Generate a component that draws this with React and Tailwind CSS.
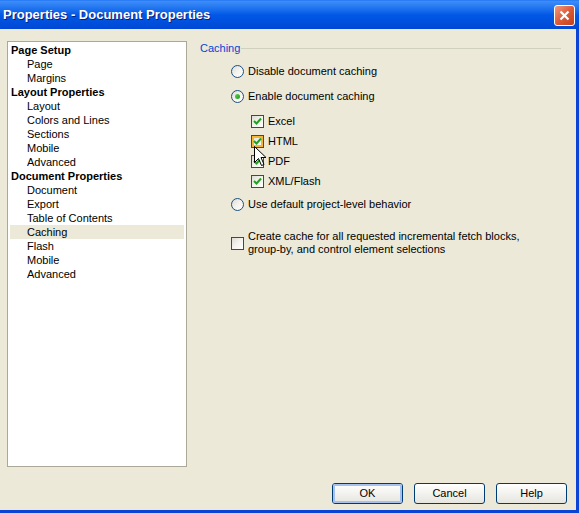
import React from "react";

const font = { fontFamily: '"Liberation Sans", Arial, sans-serif' };

const tree = [
  { label: "Page Setup", head: true },
  { label: "Page" },
  { label: "Margins" },
  { label: "Layout Properties", head: true },
  { label: "Layout" },
  { label: "Colors and Lines" },
  { label: "Sections" },
  { label: "Mobile" },
  { label: "Advanced" },
  { label: "Document Properties", head: true },
  { label: "Document" },
  { label: "Export" },
  { label: "Table of Contents" },
  { label: "Caching", active: true },
  { label: "Flash" },
  { label: "Mobile" },
  { label: "Advanced" },
];

function Radio({ checked }) {
  return (
    <div className="w-[13px] h-[13px] rounded-full border border-[#1C5180] bg-gradient-to-br from-[#DCDBD5] via-[#F4F3EE] to-white flex items-center justify-center shrink-0">
      {checked ? (
        <div className="w-[5px] h-[5px] rounded-full bg-gradient-to-br from-[#55D551] to-[#1F9A1C]" />
      ) : null}
    </div>
  );
}

function Check({ checked, hover }) {
  return (
    <div className="w-[13px] h-[13px] border border-[#1C5180] bg-gradient-to-br from-[#DCDBD5] via-[#F4F3EE] to-white flex items-center justify-center shrink-0">
      <div className={`w-[11px] h-[11px] flex items-center justify-center ${hover ? "border-2 border-[#F8B636]" : ""}`}>
        {checked ? (
          <svg width="9" height="9" viewBox="0 0 9 9" className={hover ? "-m-[2px]" : ""}>
            <path d="M1 4 L3.5 6.5 L8 1.5" fill="none" stroke="#21A121" strokeWidth="2" />
          </svg>
        ) : null}
      </div>
    </div>
  );
}

function Button({ label, def }) {
  return (
    <div className="w-[71px] h-[21px] rounded-[3px] border border-[#003C74] bg-gradient-to-b from-white to-[#E6E5DE] flex items-center justify-center">
      <div className={`w-full h-full rounded-[2px] flex items-center justify-center text-[11px] text-black ${def ? "border-2 border-[#A6C1EE]" : ""}`}>
        {label}
      </div>
    </div>
  );
}

export default function App() {
  return (
    <div className="w-[579px] h-[513px] flex flex-col bg-[#ECE9D8] overflow-hidden" style={font}>
      <div className="h-[29px] shrink-0 flex items-center justify-between pl-[3px] pr-[4px] bg-gradient-to-b from-[#3D8EF8] via-[#0058E6] to-[#0048D4] border-t border-[#2A7DF5]">
        <span className="text-white font-bold text-[13px] [text-shadow:1px_1px_0_#0A1E7A]">
          Properties - Document Properties
        </span>
        <div className="w-[21px] h-[21px] rounded-[3px] border border-white bg-gradient-to-br from-[#F09A80] via-[#DD5A37] to-[#C4401C] flex items-center justify-center">
          <svg width="11" height="11" viewBox="0 0 11 11">
            <path d="M1.5 1.5 L9.5 9.5 M9.5 1.5 L1.5 9.5" stroke="white" strokeWidth="2.2" />
          </svg>
        </div>
      </div>

      <div className="flex-1 flex flex-col border-r-[3px] border-b-[3px] border-[#0A44D6] pt-[12px] pl-[7px]">
        <div className="flex">
          <div className="w-[180px] h-[426px] bg-white border border-[#ACA899] pt-[1px] px-[2px] shrink-0">
            {tree.map((t, i) => (
              <div
                key={i}
                className={`h-[14px] flex items-center text-[11px] text-black ${t.head ? "font-bold pl-[1px]" : "pl-[17px]"} ${t.active ? "bg-[#ECE9D8]" : ""}`}
              >
                {t.label}
              </div>
            ))}
          </div>

          <div className="flex-1 ml-[13px] flex flex-col text-[11px] text-black relative">
            <div className="h-[14px] flex items-center">
              <span className="text-[#0046D5]">Caching</span>
              <div className="flex-1 h-px bg-[#D0D0BF] ml-[1px] mr-[15px]" />
            </div>

            <div className="mt-[9px] h-[14px] flex items-center gap-[4px] pl-[31px]">
              <Radio />
              <span>Disable document caching</span>
            </div>
            <div className="mt-[11px] h-[14px] flex items-center gap-[4px] pl-[31px]">
              <Radio checked />
              <span>Enable document caching</span>
            </div>

            <div className="mt-[11px] h-[14px] flex items-center gap-[4px] pl-[51px]">
              <Check checked />
              <span>Excel</span>
            </div>
            <div className="mt-[6px] h-[14px] flex items-center gap-[4px] pl-[51px]">
              <Check checked hover />
              <span>HTML</span>
            </div>
            <div className="mt-[6px] h-[14px] flex items-center gap-[4px] pl-[51px]">
              <Check checked />
              <span>PDF</span>
            </div>
            <div className="mt-[6px] h-[14px] flex items-center gap-[4px] pl-[51px]">
              <Check checked />
              <span>XML/Flash</span>
            </div>

            <div className="mt-[9px] h-[14px] flex items-center gap-[4px] pl-[31px]">
              <Radio />
              <span>Use default project-level behavior</span>
            </div>

            <div className="mt-[19px] flex items-center gap-[4px] pl-[31px]">
              <Check />
              <span className="leading-[13px]">
                Create cache for all requested incremental fetch blocks,
                <br />
                group-by, and control element selections
              </span>
            </div>

            <svg
              className="absolute left-[54px] top-[105px]"
              width="13"
              height="21"
              viewBox="0 0 13 21"
            >
              <path
                d="M0.5 0.5 L0.5 16.5 L4.5 12.5 L7.5 19.5 L10 18.5 L7 11.5 L12 11.5 Z"
                fill="white"
                stroke="black"
                strokeWidth="1"
              />
            </svg>
          </div>
        </div>

        <div className="mt-[16px] flex justify-end gap-[11px] pr-[9px]">
          <Button label="OK" def />
          <Button label="Cancel" />
          <Button label="Help" />
        </div>
      </div>
    </div>
  );
}
